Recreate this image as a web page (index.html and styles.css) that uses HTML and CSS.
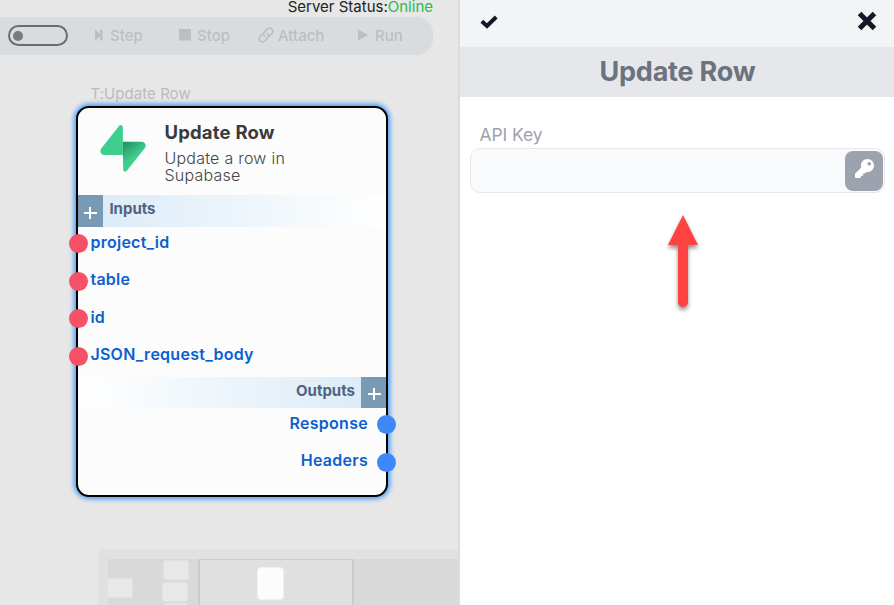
FILE: index.html
```html
<!DOCTYPE html>
<html lang="en">
<head>
<meta charset="utf-8">
<title>Update Row</title>
<link rel="stylesheet" href="styles.css">
</head>
<body>
<div class="app">
  <main class="canvas">
    <div class="status"><span class="status-label">Server Status:</span><span class="online">Online</span></div>
    <nav class="toolbar">
      <span class="toggle"><i></i></span>
      <span class="tool step"><svg width="10" height="12" viewBox="0 0 10 12"><path d="M1 0L6 5V0.500H8.500V11.500H6V7L1 12Z"/></svg><b>Step</b></span>
      <span class="tool stop"><svg width="12" height="12" viewBox="0 0 12 12"><path d="M0 0H12V11.500H0Z"/></svg><b>Stop</b></span>
      <span class="tool attach"><svg width="16" height="16" viewBox="0 0 16 16"><g fill="none" stroke="currentColor" stroke-width="1.600" stroke-linecap="round"><path d="M6.500 9.500C5 8 5.200 6.300 6.500 5L9.500 2C12.500-.500 16.500 3.500 14 6.500L11.500 9"/><path d="M9.500 6.500C11 8 10.800 9.700 9.500 11L6.500 14C3.500 16.500-.500 12.500 2 9.500L4.500 7"/></g></svg><b>Attach</b></span>
      <span class="tool run"><svg width="10" height="12" viewBox="0 0 10 12"><path d="M0 0.500L10 6L0 11.500Z"/></svg><b>Run</b></span>
    </nav>

    <div class="node-tag">T:Update Row</div>
    <section class="node">
      <header class="node-head">
        <svg class="logo" width="46" height="47" viewBox="0 0 109 113">
          <defs><linearGradient id="shade" gradientUnits="userSpaceOnUse" x1="54" y1="35" x2="85" y2="75"><stop offset="0" stop-color="#238458"/><stop offset="1" stop-color="#3ecf8e"/></linearGradient></defs>
          <path fill="url(#shade)" d="M63.708 110.284C60.848 113.885 55.050 111.912 54.981 107.314L53.974 40.063H99.194C107.384 40.063 111.952 49.523 106.859 55.937Z"/>
          <path fill="#3ecf8e" d="M45.317 2.071C48.177-1.530 53.974.443 54.043 5.041L54.485 72.292H9.831C1.640 72.292-2.928 62.832 2.166 56.418Z"/>
        </svg>
        <div class="node-copy"><h2>Update Row</h2><p>Update a row in Supabase</p></div>
      </header>
      <div class="band inputs"><span class="plus"></span><b>Inputs</b></div>
      <ul class="ports in">
        <li>project_id</li><li>table</li><li>id</li><li>JSON_request_body</li>
      </ul>
      <div class="band outputs"><b>Outputs</b><span class="plus"></span></div>
      <ul class="ports out">
        <li>Response</li><li>Headers</li>
      </ul>
    </section>

    <div class="minimap">
      <div class="map">
        <i class="block b1"></i><i class="block b2"></i><i class="block b3"></i><i class="block b4"></i>
        <div class="viewport"><i class="block current"></i></div>
      </div>
    </div>
  </main>

  <aside class="panel">
    <div class="actions">
      <svg class="check" width="18" height="14" viewBox="0 0 18 14"><path d="M1.800 6.300L7 11L16.200 2" fill="none" stroke="currentColor" stroke-width="4"/></svg>
      <svg class="close" width="20" height="20" viewBox="0 0 18 18"><path d="M2.300 2.300L15.700 15.700M15.700 2.300L2.300 15.700" fill="none" stroke="currentColor" stroke-width="4.600"/></svg>
    </div>
    <h1>Update Row</h1>
    <div class="field">
      <label>API Key</label>
      <div class="input"><span class="key"><svg width="19" height="19" viewBox="0 0 512 512"><path fill="#fff" d="M512 176c0 97.200-78.800 176-176 176-11.200 0-22.200-1.100-32.800-3.100l-24 27c-4.600 5.100-11.100 8.100-17.900 8.100H224v40c0 13.300-10.700 24-24 24h-40v40c0 13.300-10.700 24-24 24H24c-13.300 0-24-10.700-24-24v-78.100c0-6.400 2.500-12.500 7-17l161.800-161.800C163 213.800 160 195.300 160 176 160 78.800 238.800 0 336 0s176 78.500 176 176zM336 128c0 26.500 21.500 48 48 48s48-21.500 48-48-21.500-48-48-48-48 21.500-48 48z"/></svg></span></div>
    </div>
    <svg class="arrow" width="40" height="104" viewBox="0 0 40 104"><path fill="#ff4343" d="M20 5L35 35H25V92A5 5 0 0 1 15 92V35H5Z"/></svg>
  </aside>
</div>
</body>
</html>
```
FILE: styles.css
```css
* { box-sizing: border-box; }
body { margin: 0; font-family: Inter, "Liberation Sans", sans-serif; }
h1, h2, p, ul { margin: 0; padding: 0; }
svg { display: block; flex: none; }
.app { display: flex; width: 894px; height: 605px; overflow: hidden; }

.canvas { position: relative; width: 460px; height: 605px; background: #e7e7e7; border-right: 2px solid #d8dde1; overflow: hidden; }
.status { height: 17px; padding-right: 25px; text-align: right; font-size: 15px; line-height: 14px; color: #222; white-space: nowrap; }
.online { color: #1fbd4a; }
.toolbar { display: flex; align-items: center; width: 433px; height: 38px; background: #d8dcdf; border-radius: 0 16px 16px 0; color: #bebebe; }
.toggle { width: 60px; height: 21px; margin: -1px 0 0 8px; padding: 4px 3px; border: 2px solid #6c6c6c; border-radius: 11px; }
.toggle i { display: block; width: 10px; height: 10px; background: #7b7b7b; border-radius: 50%; }
.tool { display: flex; align-items: center; height: 20px; margin-top: -2px; }
.tool svg { fill: currentColor; }
.tool b { font-size: 15px; font-weight: 550; }
.step { width: 85px; margin-left: 26px; gap: 6px; }
.stop { width: 79px; gap: 6px; }
.attach { width: 99px; gap: 4px; }
.run { gap: 7px; margin-left: 1px; }

.node-tag { position: absolute; left: 90.5px; top: 84px; font-size: 15px; line-height: 20px; letter-spacing: .05px; color: #bbb; }
.node { position: absolute; left: 76.4px; top: 106px; width: 311.6px; height: 391px; background: #fcfcfc; border: 2px solid #000; border-radius: 13px; box-shadow: 0 0 5px 2px #429bf8; }
.node-head { display: flex; height: 87px; padding: 17px 0 0 22px; gap: 18px; }
.node-copy { width: 150px; }
.node h2 { font-size: 18.5px; line-height: 18px; font-weight: 700; letter-spacing: .2px; color: #3b3b3b; margin-top: -2px; }
.node p { margin-top: 9px; font-size: 16px; line-height: 17px; letter-spacing: .25px; font-weight: 350; color: #444; }
.band { display: flex; font-size: 15px; color: #50647f; }
.inputs { height: 32px; background: linear-gradient(90deg, #d9eaf7, #fff); gap: 6px; }
.outputs { height: 31px; background: linear-gradient(270deg, #d9eaf7, #fff); gap: 6px; justify-content: flex-end; }
.band b { font-weight: 700; line-height: 28px; }
.plus { width: 25px; height: 100%; background: linear-gradient(#fff, #fff) 6px 17px / 13px 2px no-repeat, linear-gradient(#fff, #fff) 11px 12px / 2px 12px no-repeat, #789ab5; }
.outputs .plus { background-position: 7px 16px, 12px 11px, 0 0; }
.ports { list-style: none; font-size: 16px; font-weight: 600; letter-spacing: .27px; color: #0b60d0; }
.ports li { position: relative; height: 37.4px; line-height: 31px; }
.ports li::before { content: ""; position: absolute; top: 7.4px; width: 19px; height: 19px; border-radius: 50%; }
.in { height: 150px; padding-left: 12px; }
.in li::before { left: -21.4px; background: #f55267; }
.out { padding-right: 18px; text-align: right; }
.out li::before { right: -28px; background: #3d89fa; }

.minimap { position: absolute; left: 98px; top: 549px; width: 360px; height: 56px; padding: 10px 0 0 10px; background: #e1e1e1; }
.map { position: relative; height: 46px; background: #d9d9d9; overflow: hidden; }
.block { position: absolute; width: 26px; height: 20px; background: #e8e8e8; border: 1px solid #e2e2e2; border-radius: 3px; }
.b1 { left: -1px; top: 19px; }
.b2 { left: 55px; top: 1px; }
.b3 { left: 54px; top: 23px; }
.b4 { left: 55px; top: 44px; }
.viewport { position: absolute; left: 90px; top: 0; width: 156px; height: 60px; background: #e0e0e0; border: 2px solid #cbcbcb; border-top-width: 1px; }
.current { left: 56.5px; top: 7px; width: 27px; height: 33px; background: #fcfcfc; border-color: #f0f0f0; border-radius: 4px; }

.panel { position: relative; width: 434px; background: #fff; }
.actions { display: flex; justify-content: space-between; height: 47px; padding: 11px 17.5px 0 19.5px; background: #f3f4f6; color: #111827; }
.check { margin-top: 3.5px; }
h1 { height: 50px; padding-left: 1px; background: #e5e7eb; color: #6b7280; font-size: 27px; line-height: 50px; font-weight: 700; letter-spacing: -.2px; text-align: center; }
.field { padding: 26px 9px 0 10px; }
label { display: block; height: 25px; padding-left: 9.5px; font-size: 17.5px; line-height: 24px; font-weight: 380; letter-spacing: -.1px; color: #9ca3af; }
.input { display: flex; justify-content: flex-end; height: 45px; padding: 2px 1px; background: #f9fafb; border: 1px solid #e5e7eb; border-radius: 10px; }
.key { width: 38px; height: 40px; padding: 8px 0 0 9.5px; background: #9ca3af; border-radius: 8px; }
.arrow { position: absolute; left: 203px; top: 210px; overflow: visible; filter: drop-shadow(0 3px 2px rgba(0,0,0,.45)); }
```
